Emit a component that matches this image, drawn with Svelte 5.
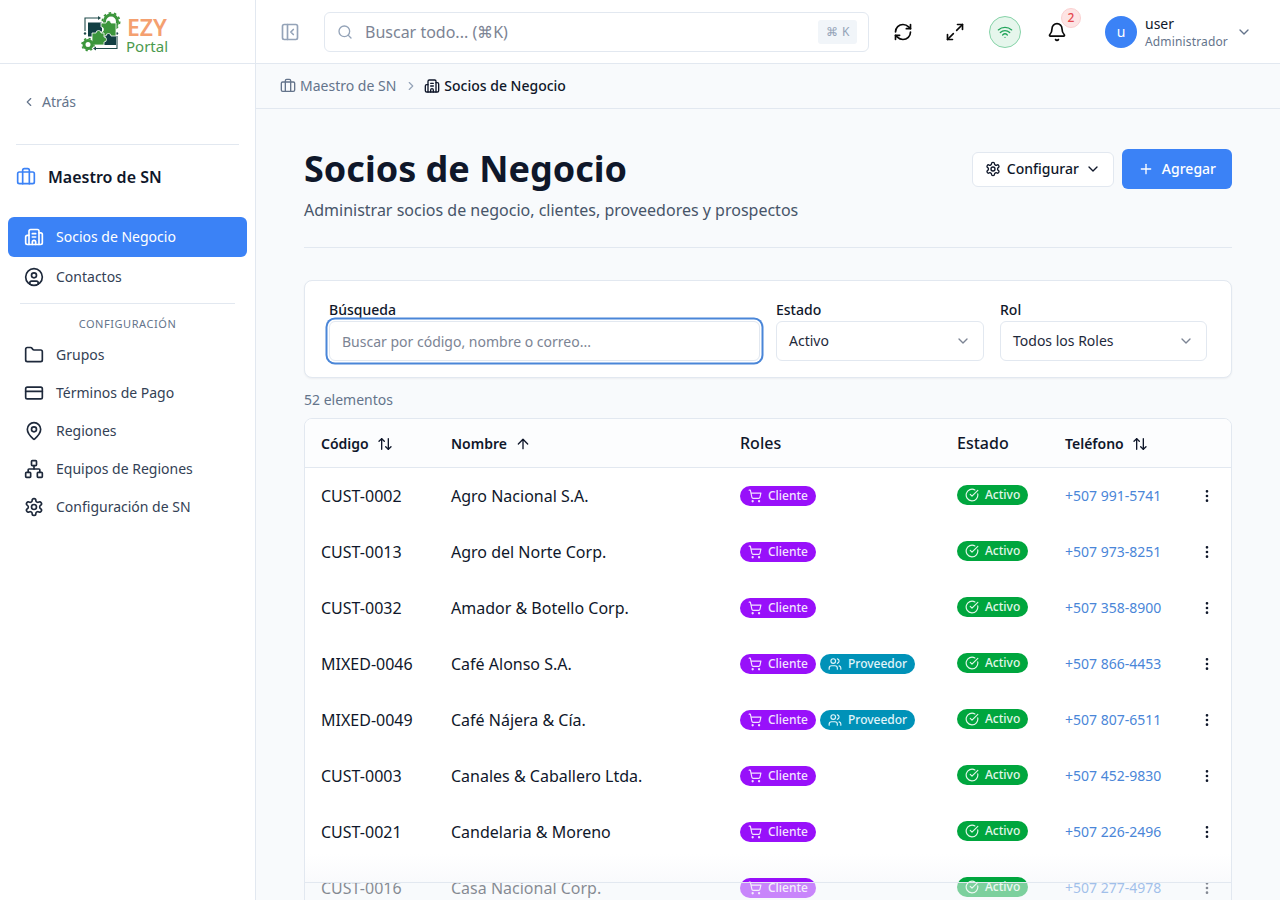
<script lang="ts">
  const rows = [
    { code: 'CUST-0002', name: 'Agro Nacional S.A.', vendor: false, phone: '+507 991-5741' },
    { code: 'CUST-0013', name: 'Agro del Norte Corp.', vendor: false, phone: '+507 973-8251' },
    { code: 'CUST-0032', name: 'Amador & Botello Corp.', vendor: false, phone: '+507 358-8900' },
    { code: 'MIXED-0046', name: 'Café Alonso S.A.', vendor: true, phone: '+507 866-4453' },
    { code: 'MIXED-0049', name: 'Café Nájera & Cía.', vendor: true, phone: '+507 807-6511' },
    { code: 'CUST-0003', name: 'Canales & Caballero Ltda.', vendor: false, phone: '+507 452-9830' },
    { code: 'CUST-0021', name: 'Candelaria & Moreno', vendor: false, phone: '+507 226-2496' },
    { code: 'CUST-0016', name: 'Casa Nacional Corp.', vendor: false, phone: '+507 277-4978' },
  ];

  const gearPath = 'M12.22 2h-.44a2 2 0 0 0-2 2v.18a2 2 0 0 1-1 1.73l-.43.25a2 2 0 0 1-2 0l-.15-.08a2 2 0 0 0-2.73.73l-.22.38a2 2 0 0 0 .73 2.73l.15.1a2 2 0 0 1 1 1.72v.51a2 2 0 0 1-1 1.74l-.15.09a2 2 0 0 0-.73 2.73l.22.38a2 2 0 0 0 2.73.73l.15-.08a2 2 0 0 1 2 0l.43.25a2 2 0 0 1 1 1.73V20a2 2 0 0 0 2 2h.44a2 2 0 0 0 2-2v-.18a2 2 0 0 1 1-1.73l.43-.25a2 2 0 0 1 2 0l.15.08a2 2 0 0 0 2.73-.73l.22-.39a2 2 0 0 0-.73-2.73l-.15-.08a2 2 0 0 1-1-1.74v-.5a2 2 0 0 1 1-1.74l.15-.09a2 2 0 0 0 .73-2.73l-.22-.38a2 2 0 0 0-2.73-.73l-.15.08a2 2 0 0 1-2 0l-.43-.25a2 2 0 0 1-1-1.73V4a2 2 0 0 0-2-2z';
</script>

{#snippet icon(size, body)}
  <svg width={size} height={size} viewBox="0 0 24 24" fill="none" stroke="currentColor" stroke-width="2" stroke-linecap="round" stroke-linejoin="round">{@html body}</svg>
{/snippet}

{#snippet briefcase(size)}
  {@render icon(size, '<path d="M16 20V4a2 2 0 0 0-2-2h-4a2 2 0 0 0-2 2v16"/><rect width="20" height="14" x="2" y="6" rx="2"/>')}
{/snippet}

{#snippet building(size)}
  {@render icon(size, '<path d="M10 12h4"/><path d="M10 8h4"/><path d="M14 21v-3a2 2 0 0 0-4 0v3"/><path d="M6 10H4a2 2 0 0 0-2 2v7a2 2 0 0 0 2 2h16a2 2 0 0 0 2-2V9a2 2 0 0 0-2-2h-2"/><path d="M6 21V5a2 2 0 0 1 2-2h8a2 2 0 0 1 2 2v16"/>')}
{/snippet}

{#snippet updown()}
  {@render icon(16, '<path d="m21 16-4 4-4-4"/><path d="M17 20V4"/><path d="m3 8 4-4 4 4"/><path d="M7 4v16"/>')}
{/snippet}

{#snippet chevron(size)}
  {@render icon(size, '<path d="m6 9 6 6 6-6"/>')}
{/snippet}

<div class="shell">
  <aside class="sidebar">
    <div class="logo">
      <svg width="46" height="42" viewBox="0 0 46 42">
        <path d="M4 20V7h13" fill="none" stroke="#1f4a4a" stroke-width="1.1"/>
        <path d="M17 5l3 2-3 2z" fill="#1f4a4a"/>
        <path d="M36 25v12.5H15" fill="none" stroke="#1f4a4a" stroke-width="1.1"/>
        <path d="M15 35.5l-3 2 3 2z" fill="#1f4a4a"/>
        <circle cx="4" cy="22.5" r="1.2" fill="#1f4a4a"/>
        <circle cx="36" cy="22.5" r="1.2" fill="#1f4a4a"/>
        <circle cx="30" cy="10.5" r="6.5" fill="none" stroke="#3c963c" stroke-width="3"/>
        <circle cx="30" cy="10.5" r="8.6" fill="none" stroke="#3c963c" stroke-width="1.8" stroke-dasharray="2.6 2.8"/>
        <rect x="7" y="11.5" width="14" height="14" fill="#123f43"/>
        <rect x="20" y="22" width="15" height="12" fill="#123f43"/>
        <path d="M20 12h5a2.5 2.5 0 0 1 5 0h5v13h-5a2.5 2.5 0 0 0-5 0h-5v-4a2.5 2.5 0 0 0 0-5z" fill="#3c963c" stroke="#fff" stroke-width="0.8"/>
        <path d="M11 22h4a2.5 2.5 0 0 1 5 0h3v4a2.5 2.5 0 0 1 0 5v3H11z" fill="#3c963c" stroke="#fff" stroke-width="0.8"/>
        <circle cx="7" cy="33.5" r="4" fill="#fff" stroke="#3c963c" stroke-width="3"/>
        <circle cx="7" cy="33.5" r="6" fill="none" stroke="#3c963c" stroke-width="1.6" stroke-dasharray="2.2 2.5"/>
      </svg>
      <div class="logo-text">
        <span class="ezy">EZY</span>
        <span class="portal">Portal</span>
      </div>
    </div>

    <div class="side-body">
      <div class="back">
        <svg width="14" height="14" viewBox="0 0 24 24" fill="none" stroke="currentColor" stroke-width="2" stroke-linecap="round" stroke-linejoin="round"><path d="m15 18-6-6 6-6"/></svg>
        <span>Atrás</span>
      </div>
      <div class="side-rule"></div>
      <div class="module">
        <span class="module-icon">{@render briefcase(20)}</span>
        <span>Maestro de SN</span>
      </div>

      <nav class="nav">
        <div class="nav-item tall active">{@render building(20)}<span>Socios de Negocio</span></div>
        <div class="nav-item tall">{@render icon(20, '<circle cx="12" cy="12" r="10"/><circle cx="12" cy="10" r="3"/><path d="M7 20.662V19a2 2 0 0 1 2-2h6a2 2 0 0 1 2 2v1.662"/>')}<span>Contactos</span></div>
        <div class="nav-rule"></div>
        <div class="nav-title">CONFIGURACIÓN</div>
        <div class="nav-item">{@render icon(20, '<path d="M20 20a2 2 0 0 0 2-2V8a2 2 0 0 0-2-2h-7.9a2 2 0 0 1-1.69-.9L9.6 3.9A2 2 0 0 0 7.93 3H4a2 2 0 0 0-2 2v13a2 2 0 0 0 2 2Z"/>')}<span>Grupos</span></div>
        <div class="nav-item">{@render icon(20, '<rect width="20" height="14" x="2" y="5" rx="2"/><line x1="2" x2="22" y1="10" y2="10"/>')}<span>Términos de Pago</span></div>
        <div class="nav-item">{@render icon(20, '<path d="M20 10c0 4.993-5.539 10.193-7.399 11.799a1 1 0 0 1-1.202 0C9.539 20.193 4 14.993 4 10a8 8 0 0 1 16 0"/><circle cx="12" cy="10" r="3"/>')}<span>Regiones</span></div>
        <div class="nav-item">{@render icon(20, '<rect x="16" y="16" width="6" height="6" rx="1"/><rect x="2" y="16" width="6" height="6" rx="1"/><rect x="9" y="2" width="6" height="6" rx="1"/><path d="M5 16v-3a1 1 0 0 1 1-1h12a1 1 0 0 1 1 1v3"/><path d="M12 12V8"/>')}<span>Equipos de Regiones</span></div>
        <div class="nav-item">{@render icon(20, `<path d="${gearPath}"/><circle cx="12" cy="12" r="3"/>`)}<span>Configuración de SN</span></div>
      </nav>
    </div>
  </aside>

  <div class="right">
    <header class="topbar">
      <span class="collapse">{@render icon(20, '<rect width="18" height="18" x="3" y="3" rx="2"/><path d="M9 3v18"/><path d="m16 15-3-3 3-3"/>')}</span>
      <div class="global-search">
        <span class="gs-icon">{@render icon(16, '<path d="m21 21-4.34-4.34"/><circle cx="11" cy="11" r="8"/>')}</span>
        <span class="gs-text">Buscar todo... (⌘K)</span>
        <kbd>⌘ K</kbd>
      </div>
      <div class="tools">
        <span class="tool">{@render icon(20, '<path d="M3 12a9 9 0 0 1 9-9 9.75 9.75 0 0 1 6.74 2.74L21 8"/><path d="M21 3v5h-5"/><path d="M21 12a9 9 0 0 1-9 9 9.75 9.75 0 0 1-6.74-2.74L3 16"/><path d="M8 16H3v5"/>')}</span>
        <span class="tool">{@render icon(20, '<path d="M15 3h6v6"/><path d="m21 3-7 7"/><path d="m3 21 7-7"/><path d="M9 21H3v-6"/>')}</span>
        <span class="wifi">{@render icon(16, '<path d="M12 20h.01"/><path d="M2 8.82a15 15 0 0 1 20 0"/><path d="M5 12.859a10 10 0 0 1 14 0"/><path d="M8.5 16.429a5 5 0 0 1 7 0"/>')}</span>
        <span class="tool bell">
          {@render icon(20, '<path d="M10.268 21a2 2 0 0 0 3.464 0"/><path d="M3.262 15.326A1 1 0 0 0 4 17h16a1 1 0 0 0 .74-1.673C19.41 13.956 18 12.499 18 8A6 6 0 0 0 6 8c0 4.499-1.411 5.956-2.738 7.326"/>')}
          <span class="badge">2</span>
        </span>
        <div class="user">
          <span class="avatar">u</span>
          <div class="user-text">
            <span class="user-name">user</span>
            <span class="user-role">Administrador</span>
          </div>
          <span class="user-chev">{@render chevron(16)}</span>
        </div>
      </div>
    </header>

    <div class="crumbs">
      <span class="crumb">{@render briefcase(16)}<span>Maestro de SN</span></span>
      <span class="crumb-sep"><svg width="14" height="14" viewBox="0 0 24 24" fill="none" stroke="currentColor" stroke-width="2" stroke-linecap="round" stroke-linejoin="round"><path d="m9 18 6-6-6-6"/></svg></span>
      <span class="crumb current">{@render building(16)}<span>Socios de Negocio</span></span>
    </div>

    <main class="main">
      <div class="page-head">
        <div>
          <h1>Socios de Negocio</h1>
          <p>Administrar socios de negocio, clientes, proveedores y prospectos</p>
        </div>
        <div class="actions">
          <button class="btn-outline">{@render icon(16, `<path d="${gearPath}"/><circle cx="12" cy="12" r="3"/>`)}<span>Configurar</span>{@render chevron(16)}</button>
          <button class="btn-primary">{@render icon(16, '<path d="M5 12h14"/><path d="M12 5v14"/>')}<span>Agregar</span></button>
        </div>
      </div>

      <section class="filters">
        <div class="field">
          <span class="label">Búsqueda</span>
          <div class="search-input">Buscar por código, nombre o correo...</div>
        </div>
        <div class="field">
          <span class="label">Estado</span>
          <div class="select"><span>Activo</span><span class="sel-chev">{@render chevron(16)}</span></div>
        </div>
        <div class="field">
          <span class="label">Rol</span>
          <div class="select"><span>Todos los Roles</span><span class="sel-chev">{@render chevron(16)}</span></div>
        </div>
      </section>

      <div class="count">52 elementos</div>

      <div class="table-wrap">
        <table>
          <colgroup>
            <col style="width:130px" /><col style="width:289px" /><col style="width:217px" /><col style="width:108px" /><col style="width:134px" /><col style="width:48px" />
          </colgroup>
          <thead>
            <tr>
              <th class="sortable"><span>Código</span>{@render updown()}</th>
              <th class="sortable"><span>Nombre</span>{@render icon(16, '<path d="m5 12 7-7 7 7"/><path d="M12 19V5"/>')}</th>
              <th>Roles</th>
              <th>Estado</th>
              <th class="sortable"><span>Teléfono</span>{@render updown()}</th>
              <th></th>
            </tr>
          </thead>
          <tbody>
            {#each rows as row}
              <tr>
                <td class="code">{row.code}</td>
                <td class="name">{row.name}</td>
                <td>
                  <div class="roles">
                    <span class="pill purple">{@render icon(14, '<circle cx="8" cy="21" r="1"/><circle cx="19" cy="21" r="1"/><path d="M2.05 2.05h2l2.66 12.42a2 2 0 0 0 2 1.58h9.78a2 2 0 0 0 1.95-1.57l1.65-7.43H5.12"/>')}<span>Cliente</span></span>
                    {#if row.vendor}
                      <span class="pill cyan">{@render icon(14, '<path d="M16 21v-2a4 4 0 0 0-4-4H6a4 4 0 0 0-4 4v2"/><circle cx="9" cy="7" r="4"/><path d="M22 21v-2a4 4 0 0 0-3-3.87"/><path d="M16 3.13a4 4 0 0 1 0 7.75"/>')}<span>Proveedor</span></span>
                    {/if}
                  </div>
                </td>
                <td><div class="status"><span class="pill green">{@render icon(14, '<path d="M21.801 10A10 10 0 1 1 17 3.335"/><path d="m9 11 3 3L22 4"/>')}<span>Activo</span></span></div></td>
                <td class="phone">{row.phone}</td>
                <td class="more">{@render icon(16, '<circle cx="12" cy="12" r="1"/><circle cx="12" cy="5" r="1"/><circle cx="12" cy="19" r="1"/>')}</td>
              </tr>
            {/each}
          </tbody>
        </table>
      </div>
    </main>

    <div class="bottom-bar"></div>
  </div>
</div>

<style>
  :global(body) {
    margin: 0;
    font-family: "Noto Sans", sans-serif;
    line-height: 1.5;
    color: #0f172a;
    background: #f8fafc;
  }

  .shell {
    display: flex;
    height: 900px;
    overflow: hidden;
  }

  svg {
    display: block;
    flex-shrink: 0;
  }

  /* sidebar */
  .sidebar {
    width: 255px;
    flex-shrink: 0;
    background: #fff;
    border-right: 1px solid #e2e8f0;
  }

  .logo {
    height: 63px;
    border-bottom: 1px solid #e2e8f0;
    display: flex;
    align-items: center;
    padding-left: 81px;
  }

  .logo-text {
    display: flex;
    flex-direction: column;
    margin-top: 8px;
    margin-left: -1px;
  }

  .ezy {
    font-size: 23px;
    font-weight: 600;
    color: #f4a070;
    line-height: 22px;
    margin-left: 1px;
  }

  .portal {
    font-size: 15px;
    color: #4a9a4e;
    line-height: 17px;
  }

  .side-body {
    padding: 0 8px;
  }

  .back {
    display: flex;
    align-items: center;
    gap: 6px;
    height: 76px;
    padding-left: 14px;
    font-size: 14px;
    line-height: 20px;
    color: #64748b;
  }

  .side-rule {
    height: 1px;
    background: #e2e8f0;
    margin: 4px 8px 0;
  }

  .module {
    display: flex;
    align-items: center;
    gap: 12px;
    height: 64px;
    padding-left: 8px;
    font-size: 16px;
    font-weight: 600;
    color: #0f172a;
  }

  .module-icon {
    color: #3b82f6;
  }

  .nav {
    margin-top: 8px;
  }

  .nav-item {
    display: flex;
    align-items: center;
    gap: 12px;
    height: 38px;
    padding-left: 16px;
    font-size: 14px;
    line-height: 20px;
    color: #334155;
    border-radius: 6px;
  }

  .nav-item svg {
    color: #1e293b;
  }

  .nav-item.tall {
    height: 40px;
  }

  .nav-item.active {
    background: #3b82f6;
    color: #fff;
  }

  .nav-item.active svg {
    color: #fff;
  }

  .nav-rule {
    height: 1px;
    background: #e2e8f0;
    margin: 6px 12px 0;
  }

  .nav-title {
    font-size: 11px;
    letter-spacing: 0.55px;
    color: #64748b;
    text-align: center;
    height: 32px;
    line-height: 40px;
  }

  /* top bar */
  .right {
    flex: 1;
    min-width: 0;
    position: relative;
    display: flex;
    flex-direction: column;
  }

  .topbar {
    height: 63px;
    flex-shrink: 0;
    background: #fff;
    border-bottom: 1px solid #e2e8f0;
    display: flex;
    align-items: center;
    padding: 0 24px;
  }

  .collapse {
    color: #94a3b8;
    width: 20px;
    margin-right: 24px;
  }

  .global-search {
    width: 543px;
    height: 38px;
    border: 1px solid #e2e8f0;
    border-radius: 6px;
    display: flex;
    align-items: center;
    background: #fff;
  }

  .gs-icon {
    color: #94a3b8;
    margin-left: 12px;
  }

  .gs-text {
    margin-left: 12px;
    font-size: 16px;
    color: #7c8494;
    flex: 1;
  }

  kbd {
    font-family: inherit;
    font-size: 12px;
    color: #94a3b8;
    background: #f1f5f9;
    border-radius: 3px;
    padding: 0 8px;
    height: 24px;
    line-height: 24px;
    margin-right: 11px;
    width: 39px;
    box-sizing: border-box;
    letter-spacing: 0.5px;
    white-space: nowrap;
  }

  .tools {
    display: flex;
    align-items: center;
    margin-left: 24px;
  }

  .tool {
    color: #0a0a0a;
    width: 20px;
    display: block;
  }

  .tool + .tool {
    margin-left: 32px;
  }

  .wifi {
    width: 32px;
    height: 32px;
    box-sizing: border-box;
    border: 1px solid #86d3a8;
    background: #e6f6ec;
    color: #22a55b;
    border-radius: 50%;
    display: flex;
    align-items: center;
    justify-content: center;
    margin-left: 24px;
  }

  .tool.bell {
    position: relative;
    margin-left: 26px;
  }

  .badge {
    position: absolute;
    top: -14px;
    left: 14px;
    width: 20px;
    height: 20px;
    border-radius: 50%;
    background: #fde4e4;
    border: 1px solid #fbd0d0;
    box-sizing: border-box;
    color: #e5484d;
    font-size: 12px;
    font-weight: 500;
    text-align: center;
    line-height: 18px;
  }

  .user {
    display: flex;
    align-items: center;
    margin-left: 38px;
  }

  .avatar {
    width: 32px;
    height: 32px;
    border-radius: 50%;
    background: #3b82f6;
    color: #fff;
    font-size: 14px;
    text-align: center;
    line-height: 32px;
  }

  .user-text {
    display: flex;
    flex-direction: column;
    margin-left: 8px;
    margin-top: 2px;
  }

  .user-name {
    font-size: 14px;
    line-height: 18px;
    color: #0f172a;
  }

  .user-role {
    font-size: 12px;
    line-height: 16px;
    margin-top: 1px;
    letter-spacing: 0.15px;
    color: #64748b;
  }

  .user-chev {
    color: #64748b;
    margin-left: 8px;
  }

  /* breadcrumb */
  .crumbs {
    height: 44px;
    flex-shrink: 0;
    border-bottom: 1px solid #e2e8f0;
    display: flex;
    align-items: center;
    padding-left: 24px;
    font-size: 14px;
    line-height: 20px;
    color: #64748b;
    background: #f8fafc;
  }

  .crumb {
    display: flex;
    align-items: center;
    gap: 4px;
  }

  .crumb.current {
    color: #0f172a;
    font-weight: 500;
  }

  .crumb-sep {
    margin: 0 6px 0 8px;
    color: #94a3b8;
  }

  /* main */
  .main {
    padding: 32px 48px 0;
    flex: 1;
    min-height: 0;
  }

  .page-head {
    display: flex;
    justify-content: space-between;
    align-items: flex-start;
    padding: 8px 0 25px;
    border-bottom: 1px solid #e2e8f0;
    margin-bottom: 32px;
  }

  h1 {
    margin: 0;
    font-size: 36px;
    line-height: 40px;
    font-weight: 700;
    color: #0f172a;
  }

  .page-head p {
    margin: 9px 0 0;
    font-size: 16px;
    line-height: 24px;
    color: #475569;
  }

  .actions {
    display: flex;
    align-items: center;
    gap: 8px;
    height: 40px;
  }

  .btn-outline, .btn-primary {
    font-family: inherit;
    display: flex;
    align-items: center;
    border-radius: 6px;
    font-size: 14px;
    line-height: 20px;
    cursor: pointer;
  }

  .btn-outline {
    height: 35px;
    padding: 0 12px;
    gap: 6px;
    background: #fff;
    border: 1px solid #e2e8f0;
    color: #0f172a;
    font-weight: 500;
  }

  .btn-primary {
    height: 40px;
    padding: 0 16px;
    gap: 8px;
    background: #3b82f6;
    border: none;
    color: #fff;
    font-weight: 500;
  }

  .filters {
    background: #fff;
    border: 1px solid #e2e8f0;
    border-radius: 8px;
    box-shadow: 0 1px 2px rgba(15, 23, 42, 0.05);
    padding: 19px 24px 16px;
    display: grid;
    grid-template-columns: 431px 208px 207px;
    gap: 16px;
    height: 98px;
    box-sizing: border-box;
  }

  .field {
    display: flex;
    flex-direction: column;
  }

  .label {
    font-size: 14px;
    line-height: 20px;
    font-weight: 500;
    color: #0f172a;
    margin-bottom: 1px;
  }

  .search-input {
    height: 40px;
    box-sizing: border-box;
    border: 1px solid #e2e8f0;
    border-radius: 6px;
    background: #fff;
    box-shadow: 0 0 0 1.5px #fff, 0 0 0 3.5px #4a86d8;
    padding-left: 12px;
    font-size: 14px;
    line-height: 40px;
    color: #7c8494;
  }

  .select {
    height: 40px;
    border: 1px solid #e2e8f0;
    border-radius: 6px;
    background: #fff;
    box-sizing: border-box;
    display: flex;
    align-items: center;
    justify-content: space-between;
    padding: 0 12px;
    font-size: 14px;
    line-height: 20px;
    color: #1e293b;
  }

  .sel-chev {
    color: #7c8494;
  }

  .count {
    font-size: 14px;
    line-height: 20px;
    color: #64748b;
    margin: 12px 0 8px;
  }

  .table-wrap {
    background: linear-gradient(to bottom, #fff 435px, #f9fafc 464px);
    border: 1px solid #e2e8f0;
    border-radius: 8px 8px 0 0;
    overflow: hidden;
  }

  table {
    width: 926px;
    table-layout: fixed;
    border-collapse: collapse;
  }

  th {
    height: 48px;
    padding: 0 16px;
    text-align: left;
    font-size: 16px;
    font-weight: 500;
    color: #0f172a;
    border-bottom: 1px solid #e2e8f0;
    background: #fcfdfe;
  }

  th.sortable {
    font-size: 14px;
    font-weight: 600;
  }

  th.sortable span {
    display: inline-block;
    vertical-align: middle;
  }

  th.sortable svg {
    display: inline-block;
    vertical-align: middle;
    margin-left: 8px;
  }

  td {
    height: 56px;
    padding: 0 16px;
    box-sizing: border-box;
    white-space: nowrap;
  }

  .code {
    font-size: 16px;
    font-weight: 450;
    color: #0f172a;
  }

  .name {
    font-size: 16px;
    color: #0f172a;
  }

  .roles {
    display: flex;
    gap: 4px;
  }

  .status {
    display: flex;
    padding-bottom: 2px;
  }

  .pill {
    display: inline-flex;
    align-items: center;
    gap: 6px;
    height: 20px;
    padding: 0 8px;
    border-radius: 10px;
    font-size: 12px;
    font-weight: 500;
    color: #fff;
  }

  .pill.purple { background: #9810fa; color: #f2e2ff; }
  .pill.cyan { background: #0092b8; color: #e0f5fa; }
  .pill.green { background: #00a63e; color: #e2f7ea; }

  .phone {
    font-size: 14px;
    color: #4a86d8;
  }

  .more {
    padding: 0 0 0 16px;
    color: #0f172a;
  }

  /* strip lying over the bottom of the scrolling table */
  .bottom-bar {
    position: absolute;
    left: 49px;
    right: 49px;
    bottom: 0;
    height: 18px;
    border-top: 1px solid #e2e8f0;
    background: rgba(248, 250, 252, 0.5);
    box-sizing: border-box;
    pointer-events: none;
  }
</style>
